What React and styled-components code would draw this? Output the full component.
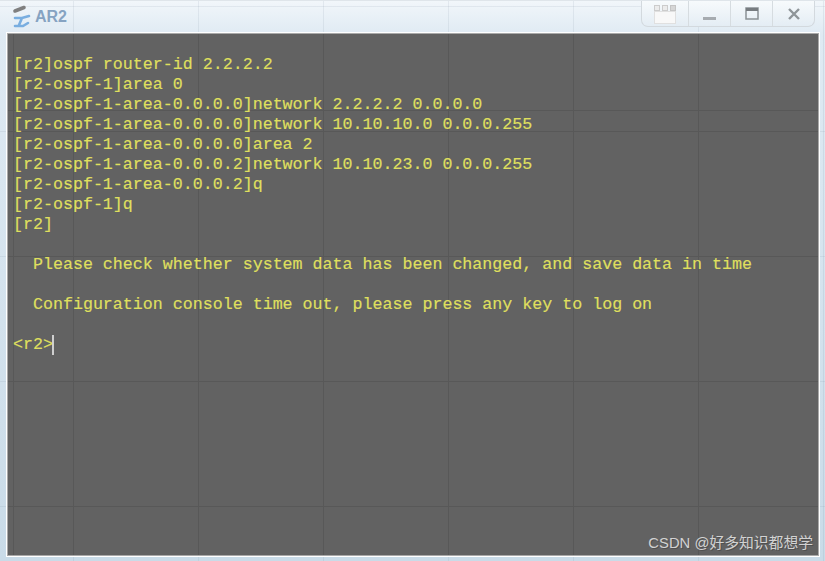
import React from 'react';
import styled, { createGlobalStyle } from 'styled-components';

const GlobalStyle = createGlobalStyle`
    html, body {
        margin: 0;
        padding: 0;
        background: #fff;
    }
`

const gridLines = (color) => `
    repeating-linear-gradient(90deg, ${color} 0 1px, transparent 1px 125px),
    repeating-linear-gradient(180deg, ${color} 0 1px, transparent 1px 125px)
`

const Window = styled.div`
    width: 825px;
    height: 561px;
    box-sizing: border-box;
    display: flex;
    flex-direction: column;
    padding: 0 6px 5px 7px;
    border-top: 1px solid #dfe5ea;
    background-color: #e3edf5;
    background-image: ${gridLines('rgba(90, 110, 130, 0.1)')},
        linear-gradient(180deg, #f1f6fa 0, #dfeaf3 34px, #c9dbe8 100%);
    background-position: 73px 5px, 73px 5px, 0 0;
`

const TitleBar = styled.div`
    height: 32px;
    flex: none;
    display: flex;
    align-items: flex-start;
    justify-content: space-between;
`

const Title = styled.div`
    display: flex;
    align-items: center;
    gap: 3px;
    padding: 4px 0 0 5px;
    color: #86a3c2;
    font: bold 16px "Liberation Sans", Arial, sans-serif;
`

const Controls = styled.div`
    display: flex;
    height: 26px;
    margin-right: 4px;
    box-sizing: border-box;
    border: 1px solid #d3d9de;
    border-top: none;
    border-radius: 0 0 7px 7px;
    background: linear-gradient(180deg, #f7fafc, #e4edf4);
`

const ControlButton = styled.div`
    width: ${props => props.$wide ? '46px' : '41px'};
    display: flex;
    align-items: center;
    justify-content: center;
    border-left: ${props => props.$first ? 'none' : '1px solid #d6dce0'};
`

const Console = styled.div`
    flex: 1;
    position: relative;
    margin-top: 0;
    padding: 21px 0 0 5px;
    border: 1px solid #a9a9a9;
    outline: 1px solid #fff;
    background-color: #626262;
    background-image: ${gridLines('#585858')};
    background-position: 65px 97px;
`

const Screen = styled.pre`
    margin: 0;
    color: #dfdf5e;
    font-family: "Liberation Mono", "Courier New", monospace;
    font-size: 16.65px;
    line-height: 20px;
    -webkit-text-stroke: 0.2px #dfdf5e;
`

const Cursor = styled.span`
    display: inline-block;
    width: 2px;
    height: 20px;
    margin-left: -1px;
    vertical-align: top;
    background: #cfcfcf;
`

const Watermark = styled.div`
    position: absolute;
    right: 5px;
    bottom: 1px;
    color: #d2d2d2;
    font-family: "Liberation Sans", "Noto Sans CJK SC", sans-serif;
    font-size: 14.8px;
    line-height: 21px;
    text-shadow: 1px 1px 0 #505050;
`

function Logo() {
    return (
        <svg width="20" height="24" viewBox="0 0 20 24">
            <path d="M3 6 L12 2.5" stroke="#7f7f7f" strokeWidth="3.6" strokeLinecap="round" />
            <path d="M3 13 H10 L17 11 M10 13 L7 20 M3 21 H11 L16 18" stroke="#79aee0" strokeWidth="2.6" fill="none" strokeLinecap="round" />
        </svg>
    )
}

function PanelIcon() {
    return (
        <svg width="24" height="22" viewBox="0 0 24 22">
            <rect x="1.5" y="8.5" width="21" height="12" fill="#f8f8f8" stroke="#e0e0e0" />
            <rect x="1.5" y="2.5" width="5" height="5" fill="#ececec" stroke="#cccccc" />
            <rect x="9.5" y="2.5" width="5" height="5" fill="#ececec" stroke="#cccccc" />
            <rect x="17.5" y="2.5" width="5" height="5" fill="#d6d6d6" stroke="#c4c4c4" />
        </svg>
    )
}

function MinimizeIcon() {
    return (
        <svg width="14" height="14" viewBox="0 0 14 14">
            <rect x="0" y="10" width="13" height="3" fill="#a6abb0" />
        </svg>
    )
}

function MaximizeIcon() {
    return (
        <svg width="14" height="13" viewBox="0 0 14 13">
            <rect x="1" y="1" width="12" height="11" fill="none" stroke="#8b9195" strokeWidth="1.5" />
            <rect x="1" y="1" width="12" height="3" fill="#777c80" />
        </svg>
    )
}

function CloseIcon() {
    return (
        <svg width="12" height="12" viewBox="0 0 12 12">
            <path d="M1 1 L11 11 M11 1 L1 11" stroke="#8f9599" strokeWidth="2.4" />
        </svg>
    )
}

const lines = `[r2]ospf router-id 2.2.2.2
[r2-ospf-1]area 0
[r2-ospf-1-area-0.0.0.0]network 2.2.2.2 0.0.0.0
[r2-ospf-1-area-0.0.0.0]network 10.10.10.0 0.0.0.255
[r2-ospf-1-area-0.0.0.0]area 2
[r2-ospf-1-area-0.0.0.2]network 10.10.23.0 0.0.0.255
[r2-ospf-1-area-0.0.0.2]q
[r2-ospf-1]q
[r2]

  Please check whether system data has been changed, and save data in time

  Configuration console time out, please press any key to log on

<r2>`

export default function App() {
    return (
        <Window>
            <GlobalStyle />
            <TitleBar>
                <Title>
                    <Logo />
                    AR2
                </Title>
                <Controls>
                    <ControlButton $wide $first><PanelIcon /></ControlButton>
                    <ControlButton><MinimizeIcon /></ControlButton>
                    <ControlButton><MaximizeIcon /></ControlButton>
                    <ControlButton><CloseIcon /></ControlButton>
                </Controls>
            </TitleBar>
            <Console>
                <Screen>{lines}<Cursor /></Screen>
                <Watermark>CSDN @好多知识都想学</Watermark>
            </Console>
        </Window>
    )
}
